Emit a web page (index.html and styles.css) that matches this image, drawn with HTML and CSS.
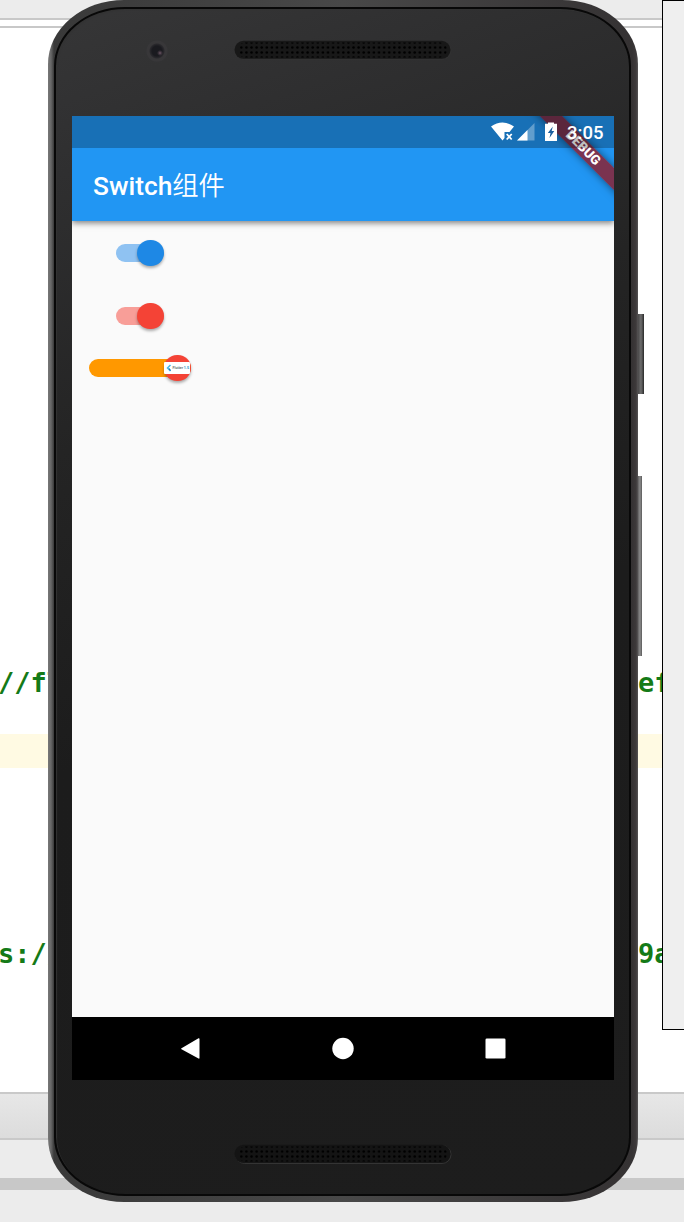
FILE: index.html
```html
<!DOCTYPE html>
<html lang="zh">
<head>
<meta charset="utf-8">
<title>Switch组件</title>
<link rel="stylesheet" href="styles.css">
</head>
<body>
<div class="desktop">
  <div class="toolbar"></div>
  <div class="tabline"></div>
  <main class="editor">
    <div class="code code-url"><span>//fl</span><span class="tail">ef</span></div>
    <div class="current-line"></div>
    <div class="code code-link"><span>s://</span><span class="tail">9a</span></div>
  </main>
  <div class="panel-head"></div>
  <div class="panel-body"></div>
  <div class="divider"></div>
  <div class="footer"></div>
</div>
<aside class="side-window"></aside>
<i class="side-button power"></i>
<i class="side-button volume"></i>
<div class="phone">
  <div class="bezel">
    <div class="top-bezel">
      <i class="camera"></i>
      <svg class="speaker" width="218" height="20" viewBox="0 0 218 20">
        <defs><pattern id="holes" width="5.1" height="5" patternUnits="userSpaceOnUse"><circle cx="2.2" cy="2.5" r="1.25" fill="#000"/></pattern></defs>
        <rect x="1.5" y="1.5" width="215.500" height="18" rx="9" fill="none" stroke="#343434" stroke-width=".6"/>
        <rect x=".5" y=".8" width="216" height="18" rx="9" fill="#181818"/>
        <rect x="4" y="2.500" width="209" height="15" rx="7" fill="url(#holes)"/>
      </svg>
    </div>
    <div class="screen">
      <div class="status-bar">
        <svg class="status-icons" width="68" height="20" viewBox="0 0 68 20">
          <path d="M0 4.500Q11.500-3.500 23 4.500L18.500 10H13.500V16L11.500 18.500Z" fill="#fff"/>
          <path d="M15.700 12 20.700 17.500M20.700 12l-5 5.500" stroke="#fff" stroke-width="1.800"/>
          <path d="M43.500 1V18.500H26Z" fill="#fff" opacity=".32"/>
          <path d="M36.500 8V18.500H26Z" fill="#fff"/>
          <path d="M54 1.800H57V.5H63V1.800H66V19H54Z" fill="#fff"/>
          <path d="M61.800 4.500 56.800 11H59.500L58.500 16 63.300 9H60.700Z" fill="#1a5f9f"/>
        </svg>
        <span class="time">3:05</span>
      </div>
      <header class="app-bar">Switch<span class="cjk">组件</span></header>
      <div class="content">
        <div class="switch blue"><i class="thumb"></i></div>
        <div class="switch red"><i class="thumb"></i></div>
        <div class="switch orange"><i class="thumb">
          <svg width="26" height="12" viewBox="0 0 26 12">
            <rect width="26" height="12" rx="1" fill="#fff"/>
            <path d="M6.500 3 3.500 6 6.500 9" fill="none" stroke="#43b9ec" stroke-width="1.500"/>
            <path d="M5 6.500 6.500 8.500" stroke="#176ba8" stroke-width="1.200"/>
            <text class="logo-text" x="8.500" y="7.400">Flutter</text>
            <text class="logo-text accent" x="19.800" y="7.400">1.5</text>
          </svg></i></div>
      </div>
      <nav class="nav-bar">
        <svg width="22" height="24" viewBox="0 0 22 24"><path d="M2.500 12.300 19.500 2.300Q20.500 2 20.500 3V22Q20.500 23 19.500 22.600L2.500 13.300Q1.500 12.800 2.500 12.300Z" fill="#fff"/></svg>
        <svg width="22" height="24" viewBox="0 0 22 24"><circle cx="11" cy="12.500" r="10.700" fill="#fff"/></svg>
        <svg width="22" height="24" viewBox="0 0 22 24"><rect x="1.500" y="2.500" width="20" height="20" rx="1.300" fill="#fff"/></svg>
      </nav>
      <div class="banner">DEBUG</div>
    </div>
    <div class="bottom-bezel">
      <svg class="speaker" width="218" height="20" viewBox="0 0 218 20">
        <rect x="1.500" y="1.500" width="215.500" height="18" rx="9" fill="none" stroke="#3a3a3a" stroke-width=".8"/>
        <rect x=".5" y=".8" width="216" height="18" rx="9" fill="#141414"/>
        <rect x="4" y="2.500" width="209" height="15" rx="7" fill="url(#holes)"/>
      </svg>
    </div>
  </div>
</div>
</body>
</html>
```
FILE: styles.css
```css
* { box-sizing: border-box; }
body { margin: 0; position: relative; width: 684px; height: 1222px; overflow: hidden; background: #fff; }
i { display: block; font-style: normal; }
svg { display: block; }

.desktop { display: flex; flex-direction: column; height: 1222px; }
.toolbar { height: 20px; background: #ececec; border-bottom: 2px solid #c8c8c8; }
.tabline { height: 8px; border-bottom: 2px solid #c8c8c8; }
.editor { height: 1064px; padding-top: 638px; }
.code { display: flex; height: 34px; line-height: 34px; white-space: pre;
  font-family: "DejaVu Sans Mono", monospace; font-size: 27px; font-weight: 700; color: #147a17; }
.code span { flex: none; width: 640px; margin-left: -2px; }
.code .tail { width: auto; margin-left: 0; }
.current-line { height: 34px; margin-top: 34px; background: #fffae3; }
.code-link { margin-top: 169px; }
.panel-head { height: 48px; border: solid #c9c9c9; border-width: 2px 0; background: linear-gradient(#e7e7e7, #dcdcdc); }
.panel-body { height: 38px; background: #ececec; }
.divider { height: 12px; background: #c8c8c8; }
.footer { height: 32px; background: #ececec; }

.side-window { position: absolute; left: 662px; top: 0; width: 23px; height: 1030px; border: 1px solid #000; background: #efefef; }
.side-button { position: absolute; left: 637px; background: linear-gradient(90deg, #3d3b3c, #6d6d6d 55%, #5b5b5b 70%, #292929); }
.power { top: 314px; width: 7px; height: 80px; }
.volume { top: 476px; width: 5px; height: 180px; background: linear-gradient(90deg, #4c4a4b, #8c8c8c 60%, #5a5a5a); }

.phone { position: absolute; left: 48px; top: 0; width: 590px; height: 1202px; padding: 7px 7px 6px 6px;
  border-radius: 76px / 64px; overflow: hidden;
  background: linear-gradient(90deg, #777 0, #686868 3px, #393939 6px, #484848 50%, #353233 584px, #3d393a 588px, #565455); }
.bezel { height: 1189px; padding: 0 17px; border: 2px solid #080808; border-radius: 71px / 59px;
  box-shadow: inset 1px 1px 1px #333;
  background: linear-gradient(160deg, #363637 0, #2f2f30 12%, #242424 32%, #1c1c1c 55%, #1d1d1d); }
.top-bezel { height: 107px; display: flex; padding: 31px 0 0 76px; margin-left: -3px; }
.camera { width: 22px; height: 22px; margin-right: 66px; border-radius: 50%;
  background: radial-gradient(circle at 14px 13px, #79606e 0, #493c47 1px, transparent 3px), radial-gradient(circle, #1a1a1f 0 5px, #2a292d 7px, #383739 8px 10px, #343436 11px); }
.speaker { flex: none; }
.screen { position: relative; display: flex; flex-direction: column; width: 542px; height: 964px; margin-left: -1px; overflow: hidden; background: #fafafa; }
.status-bar { z-index: 3; height: 32px; flex: none; display: flex; padding: 6px 10px 0 419px; background: rgba(0,0,0,.25); }
.status-icons { flex: none; }
.time { margin-left: 8px; font: 500 18.500px/22px Roboto, sans-serif; color: #fff; }
.app-bar { z-index: 1; height: 105px; margin-top: -32px; flex: none; padding: 32px 21px 0; font: 500 26.300px/76px Roboto, "Noto Sans CJK SC", sans-serif; color: #fff; background: #2196f3; box-shadow: 0 2px 6px rgba(0,0,0,.5); }
.cjk { font-weight: 350; }
.content { flex: 1; padding-left: 44px; padding-top: 23px; }
.switch { display: flex; align-items: center; justify-content: flex-end; width: 47.5px; height: 18px; margin-bottom: 45px; border-radius: 9px; }
.thumb { flex: none; width: 26.5px; height: 26.5px; border-radius: 50%; box-shadow: 0 2px 3px rgba(0,0,0,.32); }
.blue { background: #8fc2f2; }
.blue .thumb { background: #1e88e5; }
.red { background: #f89e98; }
.red .thumb { background: #f44336; }
.orange { width: 101.500px; margin: -11px 0 0 -27px; background: #ff9800; }
.orange .thumb { padding: 7px 0 0 0; background: #f44336; }
.logo-text { font: 700 3.600px Roboto, sans-serif; fill: #6b7074; }
.accent { fill: #168dc5; }
.nav-bar { height: 63px; flex: none; display: flex; align-items: center; justify-content: space-between; padding: 0 108px 1px 107px; background: #000; }
.banner { position: absolute; z-index: 2; left: 441px; top: 24px; width: 140px; height: 16px; transform: rotate(45deg);
  background: rgba(152,17,25,.75); box-shadow: 0 0 8px rgba(0,0,0,.5); color: #fff;
  font: 900 13.400px/16px Roboto, sans-serif; text-align: center; }
.bottom-bezel { padding: 64px 0 0 162px; margin-left: -1px; }
```
